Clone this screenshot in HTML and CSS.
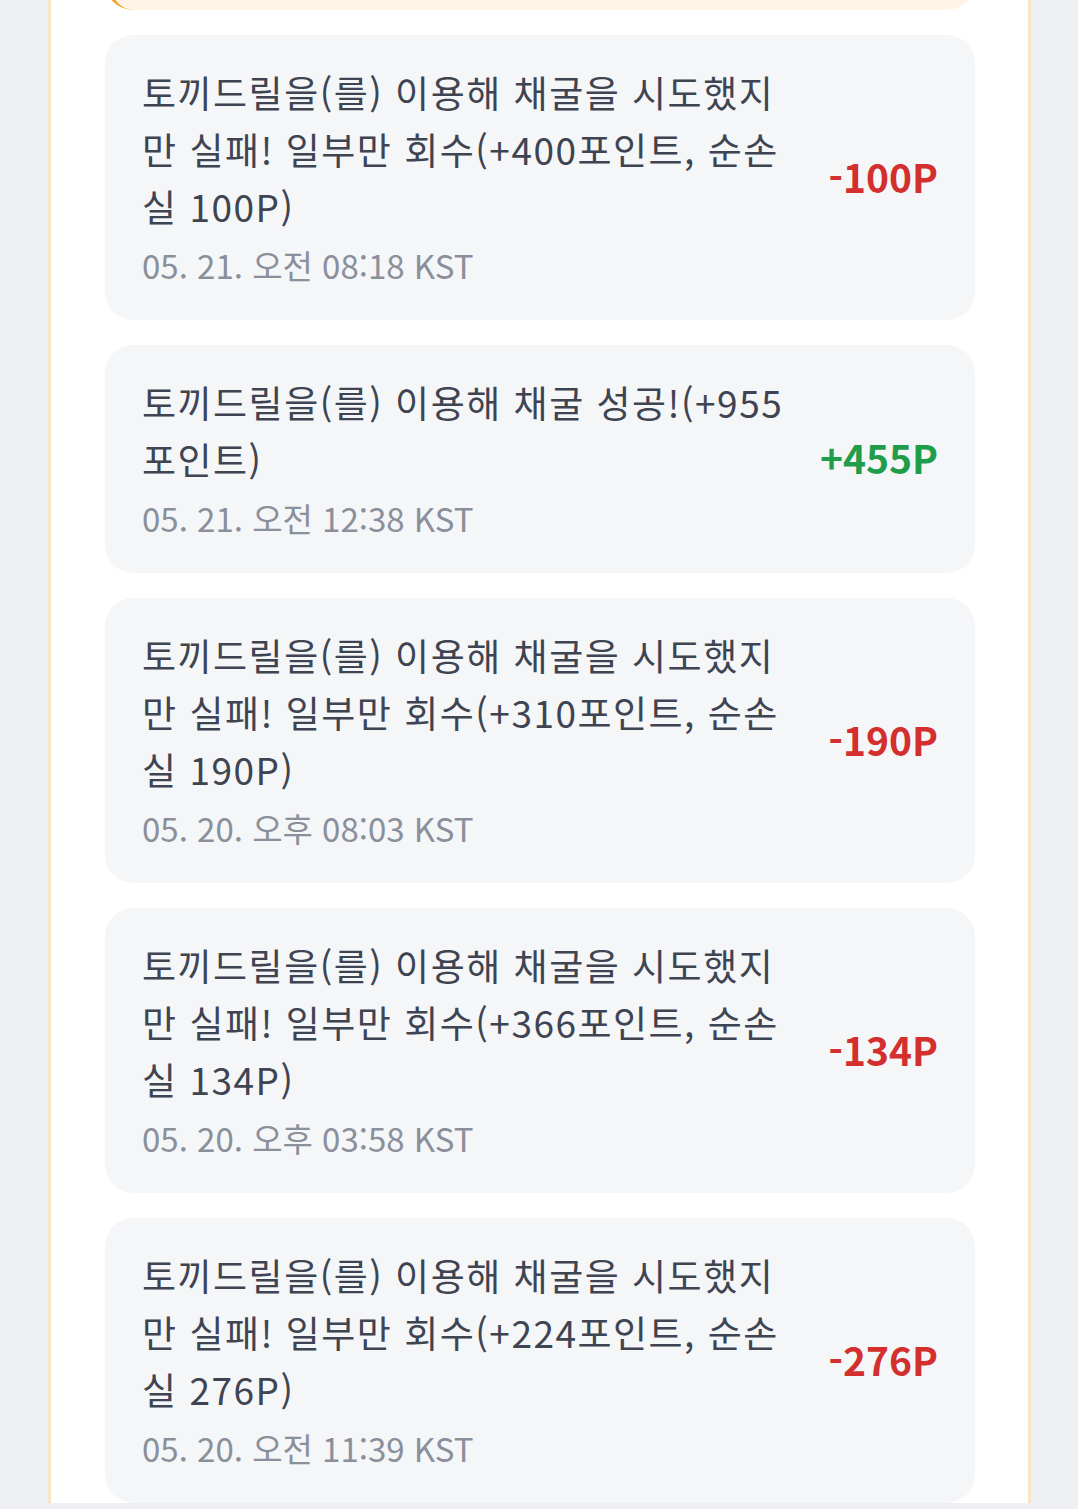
FILE: index.html
```html
<!DOCTYPE html>
<html lang="ko">
<head>
    <meta charset="UTF-8">
    <meta name="viewport" content="width=device-width, initial-scale=1.0">
    <title>포인트 내역</title>
    <link rel="stylesheet" href="styles.css">
</head>
<body>

    <div class="panel">
        <div class="notice"></div>

        <ul class="history">
            <li class="entry">
                <div class="entry-body">
                    <p class="entry-text">토끼드릴을(를) 이용해 채굴을 시도했지만 실패! 일부만 회수(+400포인트, 순손실 100P)</p>
                    <p class="entry-date">05. 21. 오전 08:18 KST</p>
                </div>
                <span class="amount minus">-100P</span>
            </li>
            <li class="entry">
                <div class="entry-body">
                    <p class="entry-text">토끼드릴을(를) 이용해 채굴 성공!(+955포인트)</p>
                    <p class="entry-date">05. 21. 오전 12:38 KST</p>
                </div>
                <span class="amount plus">+455P</span>
            </li>
            <li class="entry">
                <div class="entry-body">
                    <p class="entry-text">토끼드릴을(를) 이용해 채굴을 시도했지만 실패! 일부만 회수(+310포인트, 순손실 190P)</p>
                    <p class="entry-date">05. 20. 오후 08:03 KST</p>
                </div>
                <span class="amount minus">-190P</span>
            </li>
            <li class="entry">
                <div class="entry-body">
                    <p class="entry-text">토끼드릴을(를) 이용해 채굴을 시도했지만 실패! 일부만 회수(+366포인트, 순손실 134P)</p>
                    <p class="entry-date">05. 20. 오후 03:58 KST</p>
                </div>
                <span class="amount minus">-134P</span>
            </li>
            <li class="entry">
                <div class="entry-body">
                    <p class="entry-text">토끼드릴을(를) 이용해 채굴을 시도했지만 실패! 일부만 회수(+224포인트, 순손실 276P)</p>
                    <p class="entry-date">05. 20. 오전 11:39 KST</p>
                </div>
                <span class="amount minus">-276P</span>
            </li>
        </ul>
    </div>

</body>
</html>
```

FILE: styles.css
```css
body {
    margin: 0;
    background-color: #eef0f3;
    font-family: "Noto Sans CJK KR", "Noto Sans", sans-serif;
    overflow: hidden;
}

.panel {
    margin: 0 47px 0 48px;
    min-height: 1509px;
    background-color: #ffffff;
    border-left: 3px solid #f5e6c6;
    border-right: 3px solid #f5e6c6;
    padding: 0 53px 0 54px;
}

.notice {
    height: 70px;
    margin-top: -60px;
    margin-bottom: 25px;
    background-color: #fff4e6;
    border-left: 5px solid #f3a21f;
    border-radius: 28px;
}

.history {
    list-style: none;
    margin: 0;
    padding: 0;
}

.entry {
    display: flex;
    align-items: center;
    gap: 26px;
    padding: 29px 37px 33px 37px;
    margin-bottom: 25px;
    background-color: #f5f6f8;
    border-radius: 28px;
}

.entry-body {
    flex: 1;
}

.entry-text {
    margin: 0;
    font-size: 37px;
    line-height: 57px;
    letter-spacing: 1.5px;
    color: #3e4451;
}

.entry-date {
    margin: 8px 0 0 0;
    font-size: 33px;
    line-height: 44px;
    color: #8a909b;
}

.amount {
    min-width: 120px;
    text-align: right;
    font-size: 39px;
    font-weight: bold;
}

.minus {
    color: #d32f2f;
}

.plus {
    color: #1f9d4b;
}
```
